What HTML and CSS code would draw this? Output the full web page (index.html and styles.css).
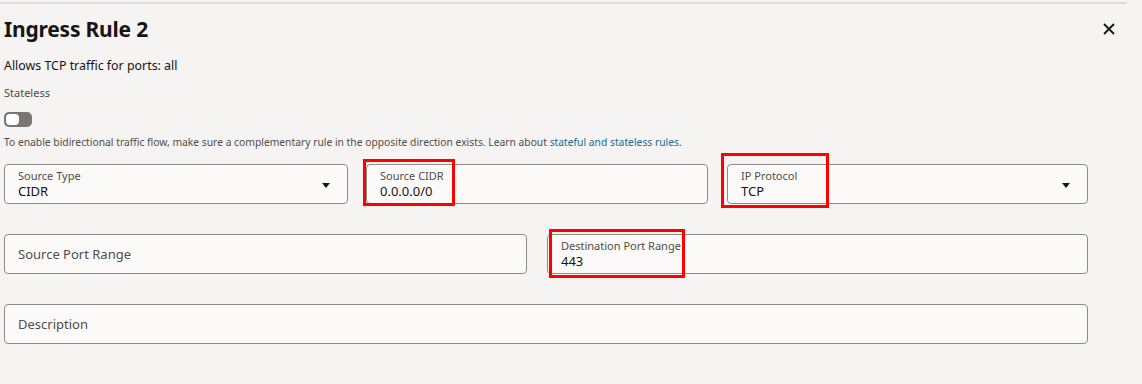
FILE: index.html
```html
<!DOCTYPE html>
<html lang="en">

<head>
    <meta charset="UTF-8">
    <meta name="viewport" content="width=device-width, initial-scale=1.0">
    <title>Ingress Rule 2</title>
    <link rel="stylesheet" href="styles.css">
</head>

<body>
    <div class="panel">
        <header class="panel-head">
            <h1>Ingress Rule 2</h1>
            <button class="close" aria-label="Close">
                <svg width="12" height="12" viewBox="0 0 12 12">
                    <path d="M1 1 L11 11 M11 1 L1 11" stroke="#161513" stroke-width="1.8" fill="none" />
                </svg>
            </button>
        </header>

        <p class="summary">Allows TCP traffic for ports: all</p>

        <div class="switch-label">Stateless</div>
        <div class="switch"><span class="knob"></span></div>

        <p class="help">To enable bidirectional traffic flow, make sure a complementary rule in the opposite direction
            exists. Learn about <a href="#">stateful and stateless rules.</a></p>

        <div class="row row-three">
            <div class="field select">
                <span class="label">Source Type</span>
                <span class="value">CIDR</span>
                <span class="caret"></span>
            </div>
            <div class="field">
                <span class="label">Source CIDR</span>
                <span class="value">0.0.0.0/0</span>
                <span class="mark mark-cidr"></span>
            </div>
            <div class="field select">
                <span class="label">IP Protocol</span>
                <span class="value">TCP</span>
                <span class="caret"></span>
                <span class="mark mark-proto"></span>
            </div>
        </div>

        <div class="row row-two">
            <div class="field empty">
                <span class="placeholder">Source Port Range</span>
            </div>
            <div class="field">
                <span class="label">Destination Port Range</span>
                <span class="value">443</span>
                <span class="mark mark-dest"></span>
            </div>
        </div>

        <div class="row">
            <div class="field empty">
                <span class="placeholder">Description</span>
            </div>
        </div>
    </div>
</body>

</html>
```

FILE: styles.css
```css
body {
    margin: 0;
    background: #f5f4f2;
    font-family: "Noto Sans", "Open Sans", sans-serif;
    color: #161513;
}

.panel {
    width: 1127px;
    border-top: 2px solid #dcdcdc;
    margin-top: 2px;
    padding-left: 4px;
    box-sizing: border-box;
}

.panel-head {
    display: flex;
    align-items: center;
    justify-content: space-between;
    width: 1116px;
    height: 50px;
}

h1 {
    margin: 0;
    font-size: 21px;
    font-weight: 700;
    letter-spacing: -0.2px;
}

.close {
    border: none;
    background: none;
    padding: 0;
    width: 12px;
    height: 12px;
    margin-right: 5px;
    margin-top: 0;
}

.summary {
    margin: 2px 0 0;
    font-size: 12.4px;
    line-height: 20px;
}

.switch-label {
    margin-top: 9px;
    font-size: 11px;
    line-height: 16px;
    color: #4f4c49;
}

.switch {
    margin-top: 11px;
    width: 28px;
    height: 15px;
    border-radius: 5px;
    background: #7a7672;
    position: relative;
}

.knob {
    position: absolute;
    left: 2px;
    top: 2px;
    width: 13px;
    height: 11px;
    border-radius: 4px;
    background: #fff;
}

.help {
    margin: 7px 0 0;
    font-size: 10.3px;
    line-height: 16px;
    color: #4f4c49;
}

.help a {
    color: #1c6a8a;
    text-decoration: none;
}

.row {
    display: grid;
    grid-template-columns: 1084px;
    margin-top: 30px;
}

.row-three {
    grid-template-columns: 344px 342px 362px;
    column-gap: 18px;
    margin-top: 14px;
}

.row-three .field:last-child {
    margin-left: 1px;
}

.row-two {
    grid-template-columns: 523px 541px;
    column-gap: 20px;
}

.field {
    position: relative;
    height: 40px;
    box-sizing: border-box;
    border: 1px solid #8f8b87;
    border-radius: 4px;
    background: #fbfaf9;
    padding: 3px 13px 0;
    display: flex;
    flex-direction: column;
}

.label {
    font-size: 11px;
    line-height: 15px;
    color: #4f4c49;
}

.value {
    font-size: 13px;
    line-height: 16px;
}

.empty {
    justify-content: center;
    padding-top: 0;
}

.placeholder {
    font-size: 13px;
    color: #4f4c49;
}

.caret {
    position: absolute;
    right: 17px;
    top: 18px;
    width: 0;
    height: 0;
    border-left: 4px solid transparent;
    border-right: 4px solid transparent;
    border-top: 5px solid #161513;
}

.mark {
    position: absolute;
    border: 3px solid #f00;
    box-sizing: border-box;
}

.mark-cidr {
    left: -4px;
    top: -6px;
    width: 92px;
    height: 47px;
}

.mark-proto {
    left: -7px;
    top: -12px;
    width: 108px;
    height: 55px;
}

.mark-dest {
    left: 1px;
    top: -6px;
    width: 136px;
    height: 49px;
}
```
